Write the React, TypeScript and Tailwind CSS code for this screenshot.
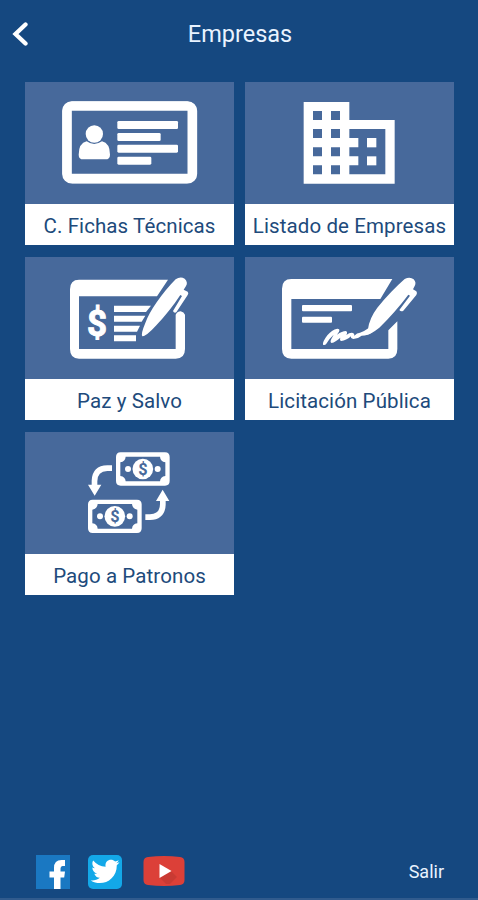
import type { ReactNode } from 'react';

function IdCardIcon() {
  return (
    <svg viewBox="30 20 627 366" className="h-full w-full" fill="white">
      <rect x="156" y="92" width="376" height="218" rx="14" fill="none" stroke="white" strokeWidth="29" />
      <rect x="150" y="86" width="388" height="230" rx="22" fill="none" stroke="white" strokeWidth="15" />
      <circle cx="238" cy="176" r="26" />
      <path d="M215 198q22 16 46 0q24 6 24 40q0 14-14 14h-66q-14 0-14-14q0-34 24-40z" />
      <rect x="307" y="137" width="182" height="24" rx="4" />
      <rect x="307" y="173" width="130" height="24" rx="4" />
      <rect x="307" y="208" width="182" height="24" rx="4" />
      <rect x="307" y="244" width="102" height="24" rx="4" />
    </svg>
  );
}

function BuildingIcon() {
  return (
    <svg viewBox="15 20 627 366" className="h-full w-full" fill="white">
      <path
        fillRule="evenodd"
        d="M191 80h137v54h136v191H191zM219 107v27h27v-27zM273 107v27h27v-27zM219 161v27h27v-27zM273 161v27h27v-27zM219 216v27h27v-27zM273 216v27h27v-27zM219 270v27h27v-27zM273 270v27h27v-27zM328 161v27h27v28h-27v27h27v27h-27v27h108V161z"
      />
      <rect x="381" y="188" width="28" height="28" />
      <rect x="381" y="243" width="28" height="27" />
    </svg>
  );
}

function CheckPenIcon() {
  return (
    <svg viewBox="30 21 627 366" className="h-full w-full" fill="white">
      <path d="M192 89H459L426 139H192V297H482V194Q488 184 497 184Q507 186 510 194V297Q510 326 482 326H192Q165 326 165 297V118Q165 89 192 89z" />
      <text
        x="246"
        y="259"
        textAnchor="middle"
        fontSize="110"
        fontFamily="Roboto, sans-serif"
        fontWeight="700"
        stroke="white"
        strokeWidth="3"
        textLength="60"
        lengthAdjust="spacingAndGlyphs"
      >
        $
      </text>
      <path d="M297 167h111l-15 19h-96zM297 197h94l-11 18h-83zM297 227h78l-9 18h-69zM297 256h66v18h-66z" />
      <path d="M382 259Q377 252 391 219Q400 193 425 157Q454 116 482 88Q496 78 509 86Q520 97 513 108L506 119L518 125Q522 129 518 135L484 187Q477 190 474 183L501 138L496 135Q466 181 424 226Q394 259 382 259z" />
    </svg>
  );
}

function SignPenIcon() {
  return (
    <svg viewBox="15 21 627 366" className="h-full w-full" fill="white">
      <path d="M154 87H457L421 147H154V297H445V241L472 214V297Q472 326 445 326H154Q126 326 126 297V116Q126 87 154 87z" />
      <rect x="186" y="165" width="150" height="19" rx="3" />
      <rect x="186" y="200" width="90" height="18" rx="3" />
      <path d="M249 284Q247 276 262 256Q275 239 292 236Q301 236 297 245L291 254Q306 243 318 243Q324 246 319 255Q330 247 339 249Q344 251 343 257Q351 248 360 248Q372 245 385 235L398 245Q384 256 365 257Q353 267 340 267Q331 265 333 259Q318 272 304 273Q298 271 301 263Q286 276 275 279Q269 276 274 267L281 254Q268 265 258 283Q254 287 249 284z" />
      <path d="M377 256Q372 248 384 237Q388 205 412 173Q452 124 494 87Q510 79 521 88Q530 98 524 108L519 118L529 124Q533 129 529 135L490 182Q483 186 478 180L510 137L505 134Q466 186 418 233Q394 252 377 256z" />
    </svg>
  );
}

function Banknote({ x, y }: { x: number; y: number }) {
  return (
    <g transform={`translate(${x} ${y})`}>
      <path
        fillRule="evenodd"
        d="M14 0H147Q161 0 161 14V86Q161 100 147 100H14Q0 100 0 86V14Q0 0 14 0zM29 13Q28 27 13 30V71Q28 73 29 87H132Q133 73 148 71V30Q133 27 132 13z"
      />
      <circle cx="80.500" cy="50" r="31" />
      <circle cx="36" cy="50" r="9" />
      <circle cx="125" cy="50" r="9" />
      <text
        x="80.500"
        y="67"
        textAnchor="middle"
        fontSize="49"
        fontFamily="Roboto, sans-serif"
        fontWeight="700"
        fill="#47699b"
      >
        $
      </text>
    </g>
  );
}

function PaymentIcon() {
  return (
    <svg viewBox="30 20 627 366" className="h-full w-full" fill="white">
      <Banknote x={303} y={81} />
      <Banknote x={219} y={223} />
      <path d="M291 120V137H277Q247 138 247 168V178H259L239 211L219 178H230V166Q232 121 277 120z" />
      <path d="M391 284V267H405Q435 266 435 236V227H423L443 193L463 227H452V238Q450 283 405 284z" />
    </svg>
  );
}

function Tile({ label, children }: { label: string; children: ReactNode }) {
  return (
    <button className="flex h-[163px] flex-col bg-[#47699b] text-left">
      <div className="h-[122px] w-full">{children}</div>
      <div className="flex w-full flex-1 items-center justify-center bg-white pt-[3px] text-[20.5px] tracking-[0.1px] whitespace-nowrap text-[#204a7b]">
        {label}
      </div>
    </button>
  );
}

function SocialLinks() {
  return (
    <div className="flex items-center">
      <svg viewBox="0 0 34 34" className="h-[34px] w-[34px]">
        <rect width="34" height="34" fill="#1a78c2" />
        <path
          d="M18 34V22.500H13.500V16.500H18V13Q18 5 25.500 5H29V11H26.500Q24.500 11 24.500 13.500V16.500H29L28.200 22.500H24.500V34z"
          fill="white"
        />
      </svg>
      <svg viewBox="0 0 34 34" className="ml-[18px] h-[34px] w-[34px]">
        <rect width="34" height="34" rx="5" fill="#13a8e8" />
        <path
          d="M31.500 7.300C30.400 7.800 29.300 8.100 28.200 8.200C29.400 7.500 30.200 6.500 30.700 5.200C29.600 5.900 28.400 6.300 27.100 6.600C23.400 2.700 16.400 5.500 17.600 11.700C12.700 11.500 8.200 9.200 5.200 5.500C3.600 8.200 4.400 11.600 7 13.300C6 13.300 5.100 13 4.300 12.600C4.300 15.500 6.200 17.900 9 18.600C8.100 18.800 7.200 18.800 6.300 18.700C7.100 21 9.200 22.700 11.800 22.800C9.200 24.900 5.900 25.800 2.700 25.400C13.500 32.300 29 25.300 28.800 10.200C29.900 9.400 30.800 8.400 31.500 7.300z"
          fill="white"
        />
      </svg>
      <svg viewBox="0 0 42 30" className="mb-0.5 ml-[21px] h-[30px] w-[42px]">
        <path d="M5 1Q21-1 37 1Q41.500 1.500 41.500 6V24Q41.500 28.500 37 29Q21 31 5 29Q0.500 28.500 0.500 24V6Q0.500 1.500 5 1z" fill="#dc4038" />
        <path d="M17 22L28 15L34 21L27 28H23z" fill="#c93a33" />
        <path d="M16.500 8L28.500 15L16.500 22z" fill="white" />
      </svg>
    </div>
  );
}

export default function App() {
  return (
    <div className="flex h-[900px] w-[478px] flex-col border-b-2 border-[#315b8d] bg-[#154880] font-[Roboto,sans-serif]">
      <header className="grid h-[82px] grid-cols-[60px_1fr_60px] pb-3.5">
        <button className="flex items-center pl-3" aria-label="Volver">
          <svg viewBox="0 0 16 24" className="h-6 w-4">
            <path d="M13.500 2.500L3.500 12L13.500 21.500" fill="none" stroke="white" strokeWidth="4.300" strokeLinecap="round" />
          </svg>
        </button>
        <h1 className="flex items-center justify-center pt-0.5 pl-0.5 text-[23.5px] text-[#e9f3ff]">Empresas</h1>
      </header>

      <main className="grid flex-1 grid-cols-[209px_209px] content-start gap-x-[11px] gap-y-3 pl-[25px]">
        <Tile label="C. Fichas Técnicas">
          <IdCardIcon />
        </Tile>
        <Tile label="Listado de Empresas">
          <BuildingIcon />
        </Tile>
        <Tile label="Paz y Salvo">
          <CheckPenIcon />
        </Tile>
        <Tile label="Licitación Pública">
          <SignPenIcon />
        </Tile>
        <Tile label="Pago a Patronos">
          <PaymentIcon />
        </Tile>
      </main>

      <footer className="flex items-center justify-between pr-[34px] pb-[9px] pl-9">
        <SocialLinks />
        <button className="text-lg text-[#e9f3ff]">Salir</button>
      </footer>
    </div>
  );
}
